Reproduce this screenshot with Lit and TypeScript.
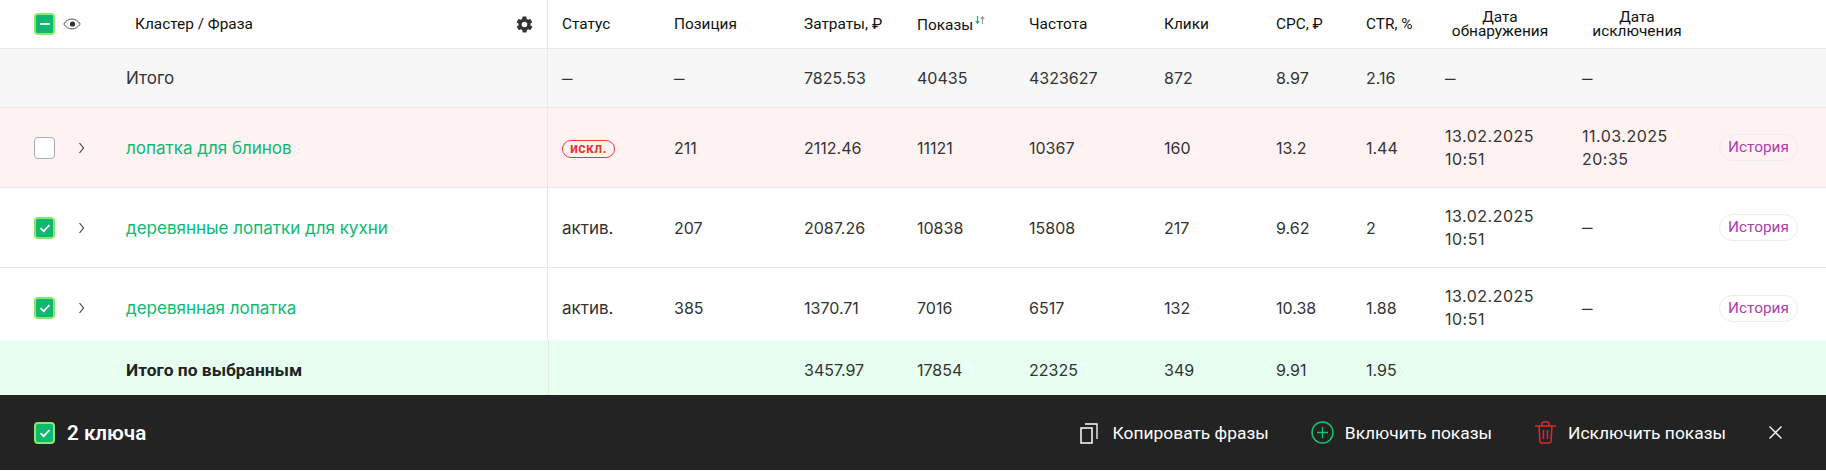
import { LitElement, html, css, svg } from "lit";
import { customElement } from "lit/decorators.js";

type Row = { name: string; status: string; v: string[]; d1: string[]; d2: string[]; cls: string; checked: boolean };

const rows: Row[] = [
  { name: "лопатка для блинов", status: "искл.", v: ["211", "2112.46", "11121", "10367", "160", "13.2", "1.44"], d1: ["13.02.2025", "10:51"], d2: ["11.03.2025", "20:35"], cls: "pink", checked: false },
  { name: "деревянные лопатки для кухни", status: "актив.", v: ["207", "2087.26", "10838", "15808", "217", "9.62", "2"], d1: ["13.02.2025", "10:51"], d2: ["–"], cls: "", checked: true },
  { name: "деревянная лопатка", status: "актив.", v: ["385", "1370.71", "7016", "6517", "132", "10.38", "1.88"], d1: ["13.02.2025", "10:51"], d2: ["–"], cls: "last", checked: true },
];

const check = svg`<svg viewBox="0 0 14 14" width="14" height="14"><path d="M2.500 7.200 5.700 10.200 11.500 4" fill="none" stroke="#fff" stroke-width="1.700"/></svg>`;
const isDash = (t: string) => t === "–";

@customElement("app-root")
export class AppRoot extends LitElement {
  static styles = css`
    :host { display: block; width: 1826px; height: 471px; overflow: hidden; background: #fff; font-family: "Inter", "Noto Sans", sans-serif; font-size: 16px; color: #333; }
    .row { display: grid; grid-template-columns: 548px 112px 130px 113px 112px 135px 112px 90px 79px 137px 137px 1fr; align-items: center; border-bottom: 1px solid #e8e8e8; box-sizing: border-box; }
    .cell { padding-left: 14px; white-space: nowrap; }
    .dash { font-size: 21px; font-weight: 300; line-height: 23px; letter-spacing: 0; }
    .first { display: flex; align-items: center; align-self: stretch; border-right: 1px solid #e8e8e8; box-sizing: border-box; padding-left: 34px; }
    .head { height: 49px; font-family: "Roboto", sans-serif; font-size: 15.400px; color: #111; }
    .eye { margin-left: 8px; }
    .title { margin-left: 54px; flex: 1; }
    .gear { margin-right: 13px; }
    .two { width: 110px; text-align: center; line-height: 14.500px; margin-left: 14px; }
    .sort { margin-left: 1px; vertical-align: 5px; }
    .total { height: 59px; background: #f7f7f7; }
    .data { height: 80px; }
    .data.pink { background: #fff2f2; }
    .data.last { height: 72px; padding-top: 8px; border-bottom: 0; }
    .data.last .first { margin-top: -8px; padding-top: 8px; }
    .dates { line-height: 23px; letter-spacing: .5px; }
    .exp { margin-left: 23px; margin-right: 41px; display: block; }
    .name { color: #10b873; font-size: 17px; }
    .act17 { font-size: 17px; }
    .indent { margin-left: 92px; font-size: 17px; }
    .cbx { width: 21px; height: 22px; box-sizing: border-box; border-radius: 4px; flex: none; display: flex; align-items: center; justify-content: center; }
    .cbx.on { background: #10b86f; border: 2px solid #86e96c; }
    .cbx.off { background: #fff; border: 1.500px solid #a9a9b4; }
    .badge { display: inline-block; border: 1px solid #ee3a3a; border-radius: 9px; color: #e93535; font-family: "Roboto", sans-serif; font-weight: 600; font-size: 14px; line-height: 15px; padding: 0 7px 1px; letter-spacing: .4px; }
    .hist { display: inline-block; box-sizing: border-box; height: 27px; width: 79px; text-align: center; line-height: 25px; border: 1px solid #ececf0; border-radius: 14px; color: #b13bb0; font-family: "Roboto", sans-serif; font-size: 15.400px; }
    .act { padding-left: 14px; }
    .sum { height: 55px; background: #e6fff1; border-bottom: 0; padding-top: 4px; grid-template-columns: 549px 111px 130px 113px 112px 135px 112px 90px 79px 137px 137px 1fr; }
    .sum .first { padding-left: 126px; margin-top: -4px; padding-top: 4px; font-family: "Roboto", sans-serif; font-size: 17.400px; font-weight: 700; color: #222; }
    .bar { height: 75px; background: #232323; color: #fff; display: flex; align-items: center; padding-left: 34px; padding-right: 43px; font-family: "Roboto", sans-serif; font-size: 17.400px; }
    .count { margin-left: 12px; font-size: 20.600px; font-weight: 600; flex: 1; }
    .action { display: flex; align-items: center; margin-right: 42px; }
    .action svg { display: block; }
    .ic-copy { margin-right: 15px; }
    .ic-plus { margin-right: 11px; }
    .ic-trash { margin-right: 11px; }
    .x { display: block; }
  `;

  render() {
    return html`
      <div class="row head">
        <div class="first">
          <div class="cbx on"><svg viewBox="0 0 14 14" width="14" height="14"><path d="M2 7h10" stroke="#fff" stroke-width="1.700"/></svg></div>
          <svg class="eye" width="18" height="12" viewBox="0 0 18 12"><path d="M.8 6C3 2.600 6 1 9 1s6 1.600 8.200 5C15 9.400 12 11 9 11S3 9.400.8 6Z" fill="none" stroke="#555" stroke-width="1"/><circle cx="9.500" cy="6" r="2.600" fill="#333"/></svg>
          <div class="title">Кластер / Фраза</div>
          <svg class="gear" width="19" height="19" viewBox="0 0 24 24"><path fill="#333" d="M19.400 13c.1-.3.1-.7.1-1s0-.7-.1-1l2.100-1.600c.2-.2.2-.4.1-.6l-2-3.500c-.1-.2-.4-.3-.6-.2l-2.500 1c-.5-.4-1.100-.7-1.700-1l-.4-2.600c0-.3-.2-.5-.5-.5h-4c-.3 0-.5.200-.5.400l-.4 2.700c-.6.2-1.200.6-1.700 1l-2.500-1c-.2-.1-.5 0-.6.200l-2 3.500c-.1.200-.1.400.1.600L4.600 11c-.1.300-.1.700-.1 1s0 .7.1 1l-2.100 1.600c-.2.200-.2.400-.1.600l2 3.500c.1.200.4.300.6.200l2.500-1c.5.400 1.100.7 1.700 1l.4 2.600c0 .3.200.5.500.5h4c.3 0 .5-.2.500-.4l.4-2.700c.6-.2 1.200-.6 1.700-1l2.500 1c.2.100.5 0 .6-.2l2-3.500c.1-.2.1-.4-.1-.6L19.400 13ZM12 15.500a3.500 3.500 0 1 1 0-7 3.500 3.500 0 0 1 0 7Z"/></svg>
        </div>
        <div class="cell">Статус</div>
        <div class="cell">Позиция</div>
        <div class="cell">Затраты, ₽</div>
        <div class="cell">Показы<svg class="sort" width="12" height="10" viewBox="0 0 12 10"><path d="M3.500 1v7M1.700 6 3.500 8.300 5.300 6" fill="none" stroke="#10b873" stroke-width="1.200"/><path d="M8.500 9V2M6.700 4 8.500 1.700 10.300 4" fill="none" stroke="#9a9aa5" stroke-width="1.200"/></svg></div>
        <div class="cell">Частота</div>
        <div class="cell">Клики</div>
        <div class="cell">CPC, ₽</div>
        <div class="cell">CTR, %</div>
        <div class="two">Дата<br />обнаружения</div>
        <div class="two">Дата<br />исключения</div>
        <div></div>
      </div>
      <div class="row total">
        <div class="first"><span class="indent">Итого</span></div>
        ${["–", "–", "7825.53", "40435", "4323627", "872", "8.97", "2.16", "–", "–"].map((t) => html`<div class="cell ${isDash(t) ? "dash" : ""}">${t}</div>`)}
        <div></div>
      </div>
      ${rows.map(
        (r) => html`
          <div class="row data ${r.cls}">
            <div class="first">
              <div class="cbx ${r.checked ? "on" : "off"}">${r.checked ? check : ""}</div>
              <svg class="exp" width="7" height="12" viewBox="0 0 7 12"><path d="M1.500 1 5.500 6 1.500 11" fill="none" stroke="#444" stroke-width="1.200"/></svg>
              <span class="name">${r.name}</span>
            </div>
            <div class="cell act17">${r.status === "искл." ? html`<span class="badge">${r.status}</span>` : r.status}</div>
            ${r.v.map((t) => html`<div class="cell">${t}</div>`)}
            <div class="cell dates">${r.d1.map((t) => html`<div>${t}</div>`)}</div>
            <div class="cell dates">${r.d2.map((t) => html`<div class="${isDash(t) ? "dash" : ""}">${t}</div>`)}</div>
            <div class="act"><span class="hist">История</span></div>
          </div>
        `
      )}
      <div class="row sum">
        <div class="first">Итого по выбранным</div>
        <div></div>
        <div></div>
        ${["3457.97", "17854", "22325", "349", "9.91", "1.95"].map((t) => html`<div class="cell">${t}</div>`)}
      </div>
      <div class="bar">
        <div class="cbx on">${check}</div>
        <div class="count">2 ключа</div>
        <div class="action">
          <svg class="ic-copy" width="18" height="22" viewBox="0 0 18 22"><rect x="1" y="6" width="11" height="15" fill="none" stroke="#fff" stroke-width="1.500"/><path d="M5 2h12v15" fill="none" stroke="#fff" stroke-width="1.300"/></svg>
          Копировать фразы
        </div>
        <div class="action">
          <svg class="ic-plus" width="23" height="23" viewBox="0 0 23 23"><circle cx="11.500" cy="11.500" r="10.500" fill="none" stroke="#13c476" stroke-width="1.500"/><path d="M11.500 6v11M6 11.500h11" stroke="#13c476" stroke-width="1.300"/></svg>
          Включить показы
        </div>
        <div class="action">
          <svg class="ic-trash" width="23" height="23" viewBox="0 0 23 23"><path d="M1 5h21M5 5l1 15.500q.1 1.500 1.500 1.500h8q1.400 0 1.500-1.500L18 5M8 5V3q0-2 2-2h3q2 0 2 2v2M9.500 9v9M13.500 9v9" fill="none" stroke="#e02727" stroke-width="1.500"/></svg>
          Исключить показы
        </div>
        <svg class="x" width="15" height="15" viewBox="0 0 15 15"><path d="M1.500 1.500 13.500 13.500M13.500 1.500 1.500 13.500" stroke="#fff" stroke-width="1.300"/></svg>
      </div>
    `;
  }
}
